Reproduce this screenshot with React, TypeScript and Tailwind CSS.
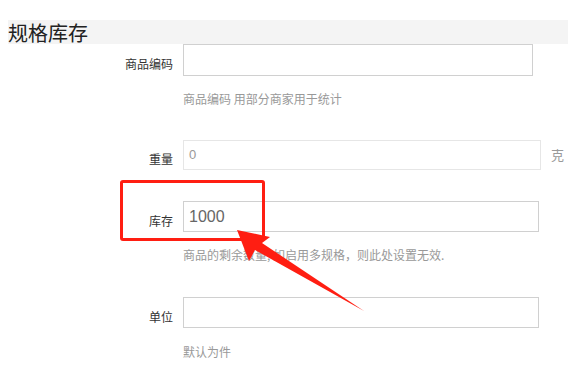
// Spec/stock section of a product edit form, with a screenshot-style
// annotation (red box + arrow) pointing at the stock field.
const cjk = { fontFamily: '"Noto Sans CJK SC", "Noto Sans", sans-serif' };

function Row(props: {
  label: string;
  value?: string;
  width: string;
  height: string;
  border: string;
  valueClass?: string;
  suffix?: string;
}) {
  return (
    <div className="flex items-center">
      <span className="w-[173px] pt-[8px] text-right text-[12px] leading-[16px] text-[#333]">
        {props.label}
      </span>
      <div
        className={`ml-[10px] flex items-center border bg-white pl-[5px] ${props.width} ${props.height} ${props.border}`}
      >
        {props.value && (
          <span
            className={props.valueClass}
            style={{ fontFamily: '"Liberation Sans", Arial, sans-serif' }}
          >
            {props.value}
          </span>
        )}
      </div>
      {props.suffix && (
        <span className="ml-[10px] text-[13px] leading-[16px] text-[#999]">{props.suffix}</span>
      )}
    </div>
  );
}

function Help(props: { text: string; className: string }) {
  return (
    <p className={`ml-[183px] text-[12px] leading-[16px] text-[#999] ${props.className}`}>
      {props.text}
    </p>
  );
}

export default function App() {
  return (
    <div className="relative h-[374px] w-[568px] overflow-hidden bg-white pt-[21px]" style={cjk}>
      <div className="ml-[8px] h-[24px] bg-[#f4f4f4]">
        <h2 className="-mt-[1px] text-[20px] leading-[26px] font-normal text-[#222]">规格库存</h2>
      </div>

      <Row label="商品编码" width="w-[350px]" height="h-[32px]" border="border-[#d0d0d0]" />
      <Help text="商品编码 用部分商家用于统计" className="mt-[15px]" />

      <div className="mt-[33px]">
        <Row
          label="重量"
          value="0"
          valueClass="text-[13px] text-[#999]"
          width="w-[358px]"
          height="h-[30px]"
          border="border-[#e6e6e6]"
          suffix="克"
        />
      </div>

      <div className="mt-[31px]">
        <Row
          label="库存"
          value="1000"
          valueClass="text-[16px] text-[#666]"
          width="w-[356px]"
          height="h-[31px]"
          border="border-[#d0d0d0]"
        />
      </div>
      <Help text="商品的剩余数量, 如启用多规格，则此处设置无效." className="mt-[15px]" />

      <div className="mt-[34px]">
        <Row label="单位" width="w-[356px]" height="h-[31px]" border="border-[#d0d0d0]" />
      </div>
      <Help text="默认为件" className="mt-[16px]" />

      {/* annotation overlay */}
      <div className="absolute top-[180px] left-[120px] h-[61px] w-[145px] rounded-[3px] border-[3px] border-[#ff1e12]" />
      <svg className="absolute top-0 left-0" width="568" height="374" viewBox="0 0 568 374">
        <polygon
          points="237,230 270,237 262,243 364,311 255,250 249,261"
          fill="#ff1e12"
        />
      </svg>
    </div>
  );
}
